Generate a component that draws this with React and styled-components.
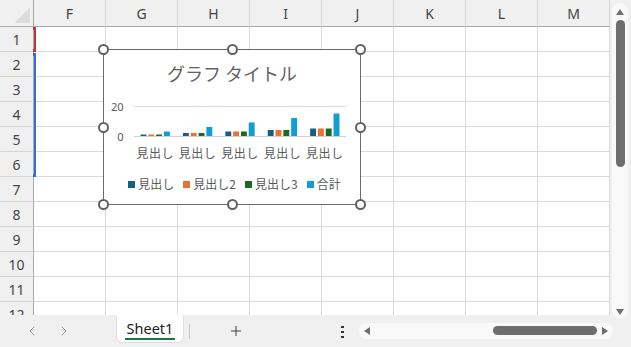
import React from "react";
import styled, { createGlobalStyle } from "styled-components";
import { ChevronLeft, ChevronRight, Plus } from "lucide-react";

const GlobalStyle = createGlobalStyle`
  html, body {
    margin: 0;
    padding: 0;
    background: #f0f0f0;
  }
  body {
    font-family: "Noto Sans", "Liberation Sans", sans-serif;
  }
  * {
    box-sizing: border-box;
  }
`;

const COLUMNS = ["F", "G", "H", "I", "J", "K", "L", "M"];
const ROWS = [1, 2, 3, 4, 5, 6, 7, 8, 9, 10, 11, 12];
const SERIES = [
  { name: "見出し", color: "#156082" },
  { name: "見出し2", color: "#E97132" },
  { name: "見出し3", color: "#196B24" },
  { name: "合計", color: "#0F9ED5" },
];
const DATA = [1, 2, 3, 4, 5].map((v) => [v, v, v, v * 3]);
const HANDLES = [
  [0, 0], [50, 0], [100, 0],
  [0, 50], [100, 50],
  [0, 100], [50, 100], [100, 100],
];

const Window = styled.div`
  width: 631px;
  height: 347px;
  display: flex;
  flex-direction: column;
  background: #f0f0f0;
  overflow: hidden;
`;

const Main = styled.div`
  display: flex;
  height: 315px;
`;

const Sheet = styled.div`
  position: relative;
  width: 610px;
  height: 315px;
  overflow: hidden;
  display: grid;
  grid-template-columns: 34px repeat(8, 72px);
  grid-template-rows: 27px repeat(12, 25px);
  background: #fff;
`;

const Corner = styled.div`
  background: #f0f0f0;
  border-right: 1px solid #a9a9a9;
  border-bottom: 1px solid #a9a9a9;
  background-image: linear-gradient(to bottom right, transparent 50%, #dcdcdc 50%);
  background-repeat: no-repeat;
  background-size: 16px 15px;
  background-position: right 3px bottom 3px;
`;

const ColHeader = styled.div`
  display: flex;
  align-items: center;
  justify-content: center;
  background: #f0f0f0;
  border-right: 1px solid #d6d6d6;
  border-bottom: 1px solid #a9a9a9;
  font-size: 14px;
  color: #444;
`;

const RowHeader = styled.div`
  display: flex;
  align-items: center;
  justify-content: center;
  background: #f0f0f0;
  border-right: 1px solid #a9a9a9;
  border-bottom: 1px solid #d6d6d6;
  font-size: 14px;
  color: #444;
`;

const Cell = styled.div`
  background: #fff;
  border-right: 1px solid #dadada;
  border-bottom: 1px solid #dadada;
`;

const Presence = styled.div`
  position: absolute;
  left: 34px;
  top: ${(p) => p.$top}px;
  width: 2px;
  height: ${(p) => p.$height}px;
  background: ${(p) => p.$color};

  &::before,
  &::after {
    content: "";
    position: absolute;
    left: -1px;
    width: 3px;
    height: 3px;
    background: ${(p) => p.$color};
  }
  &::before {
    top: 0;
  }
  &::after {
    bottom: 0;
  }
`;

const Chart = styled.div`
  position: absolute;
  left: 103px;
  top: 49px;
  width: 258px;
  height: 156px;
  background: #fff;
  border: 1px solid #6b6b6b;
  display: flex;
  flex-direction: column;
  font-family: "Noto Sans CJK JP", "Noto Sans", sans-serif;
  color: #595959;
`;

const HandleLayer = styled.div`
  position: absolute;
  inset: -0.5px;
  pointer-events: none;
`;

const Handle = styled.div`
  position: absolute;
  width: 11px;
  height: 11px;
  margin: -5.5px 0 0 -5.5px;
  border-radius: 50%;
  border: 2px solid #616161;
  background: #fff;
`;

const ChartTitle = styled.div`
  padding-top: 11px;
  line-height: 24px;
  font-size: 18px;
  text-align: center;
  white-space: pre;
  color: #636363;
`;

const PlotSvg = styled.svg`
  display: block;

  text {
    fill: #595959;
  }
  .axis {
    font-family: "Noto Sans", sans-serif;
    font-size: 11px;
  }
  .cat {
    font-family: "Noto Sans CJK JP", sans-serif;
    font-size: 12px;
    letter-spacing: 0.5px;
  }
`;

const Legend = styled.div`
  display: flex;
  justify-content: center;
  gap: 9px;
  margin-top: 9px;
  padding-left: 5px;
  font-size: 12px;
  line-height: 16px;
`;

const LegendItem = styled.div`
  display: flex;
  align-items: center;
  gap: 3px;
`;

const Swatch = styled.span`
  width: 7px;
  height: 7px;
  background: ${(p) => p.$color};
`;

const VScroll = styled.div`
  width: 21px;
  padding: 3px 0 0 2px;
`;

const VTrack = styled.div`
  width: 16px;
  height: 315px;
  border-radius: 8px;
  background: #f9f9f9;
  display: flex;
  flex-direction: column;
  align-items: center;
  padding: 6px 0 3px;
`;

const VThumb = styled.div`
  width: 9px;
  height: 147px;
  margin-top: 5px;
  border-radius: 5px;
  background: #6e6e6e;
`;

const Spacer = styled.div`
  flex: 1;
`;

const BottomBar = styled.div`
  height: 32px;
  display: flex;
  align-items: center;
`;

const NavButtons = styled.div`
  width: 116px;
  display: flex;
  gap: 16px;
  padding-left: 24px;
  color: #999;
`;

const Tab = styled.div`
  align-self: flex-start;
  width: 68px;
  height: 28px;
  background: #fff;
  border: 1px solid #e0e0e0;
  border-top: none;
  border-radius: 0 0 6px 6px;
  display: flex;
  align-items: center;
  justify-content: center;
`;

const TabLabel = styled.span`
  font-size: 14.5px;
  line-height: 19px;
  color: #222;
  padding: 0 2px;
  border-bottom: 2px solid #117a3e;
  margin-top: 1px;
`;

const Separator = styled.div`
  width: 1px;
  height: 15px;
  margin-left: 5px;
  background: #c6c6c6;
`;

const AddButton = styled.div`
  display: flex;
  margin-left: 38px;
  color: #333;
`;

const MoreDots = styled.div`
  display: flex;
  flex-direction: column;
  gap: 2.5px;
  margin-left: 97px;
  margin-top: 2px;

  span {
    width: 2.5px;
    height: 2.5px;
    background: #333;
  }
`;

const HTrack = styled.div`
  width: 254px;
  height: 16px;
  margin-left: 15px;
  margin-top: -1px;
  border-radius: 8px;
  background: #f9f9f9;
  display: flex;
  align-items: center;
  padding: 0 5px;
`;

const HThumb = styled.div`
  width: 104px;
  height: 9px;
  border-radius: 5px;
  background: #6e6e6e;
  margin-right: 5px;
`;

function Arrow({ dir }) {
  const pts = {
    up: "0,6 4,0 8,6",
    down: "0,0 8,0 4,6",
    left: "6,0 6,8 0,4",
    right: "0,0 0,8 6,4",
  }[dir];
  const vertical = dir === "up" || dir === "down";
  return (
    <svg width={vertical ? 8 : 6} height={vertical ? 6 : 8} viewBox={vertical ? "0 0 8 6" : "0 0 6 8"}>
      <polygon points={pts} fill="#6e6e6e" />
    </svg>
  );
}

function Plot() {
  const left = 30;
  const right = 242;
  const base = 51.5;
  const scale = 1.5;
  const catW = (right - left) / DATA.length;
  const barW = 5.9;
  const gap = 1.9;
  const groupW = barW * 4 + gap * 3;
  return (
    <PlotSvg width="256" height="82" viewBox="0 0 256 82">
      <line x1={left} x2={right} y1="21.5" y2="21.5" stroke="#d9d9d9" />
      <line x1={left} x2={right} y1={base} y2={base} stroke="#d0d0d0" />
      <text className="axis" x="19.5" y="25.5" textAnchor="end">20</text>
      <text className="axis" x="19.5" y="55.5" textAnchor="end">0</text>
      {DATA.map((group, i) => {
        const x0 = left + i * catW + (catW - groupW) / 2;
        return (
          <g key={i}>
            {group.map((v, j) => (
              <rect
                key={j}
                x={x0 + j * (barW + gap)}
                y={base - 0.5 - v * scale}
                width={barW}
                height={v * scale}
                fill={SERIES[j].color}
              />
            ))}
            <text className="cat" x={left + i * catW + catW / 2} y="72.5" textAnchor="middle">
              見出し
            </text>
          </g>
        );
      })}
    </PlotSvg>
  );
}

export default function App() {
  return (
    <>
      <GlobalStyle />
      <Window>
        <Main>
          <Sheet>
            <Corner />
            {COLUMNS.map((c) => (
              <ColHeader key={c}>{c}</ColHeader>
            ))}
            {ROWS.map((r) => (
              <React.Fragment key={r}>
                <RowHeader>{r}</RowHeader>
                {COLUMNS.map((c) => (
                  <Cell key={c} />
                ))}
              </React.Fragment>
            ))}

            <Presence $top={27} $height={25} $color="#c4323c" />
            <Presence $top={53} $height={124} $color="#2f6fd6" />

            <Chart>
              <ChartTitle>グラフ タイトル</ChartTitle>
              <Plot />
              <Legend>
                {SERIES.map((s) => (
                  <LegendItem key={s.name}>
                    <Swatch $color={s.color} />
                    {s.name}
                  </LegendItem>
                ))}
              </Legend>
              <HandleLayer>
                {HANDLES.map(([x, y]) => (
                  <Handle key={`${x}-${y}`} style={{ left: `${x}%`, top: `${y}%` }} />
                ))}
              </HandleLayer>
            </Chart>
          </Sheet>

          <VScroll>
            <VTrack>
              <Arrow dir="up" />
              <VThumb />
              <Spacer />
              <Arrow dir="down" />
            </VTrack>
          </VScroll>
        </Main>

        <BottomBar>
          <NavButtons>
            <ChevronLeft size={16} strokeWidth={1.5} />
            <ChevronRight size={16} strokeWidth={1.5} />
          </NavButtons>
          <Tab>
            <TabLabel>Sheet1</TabLabel>
          </Tab>
          <Separator />
          <AddButton>
            <Plus size={16} strokeWidth={1.4} />
          </AddButton>
          <MoreDots>
            <span />
            <span />
            <span />
          </MoreDots>
          <HTrack>
            <Arrow dir="left" />
            <Spacer />
            <HThumb />
            <Arrow dir="right" />
          </HTrack>
        </BottomBar>
      </Window>
    </>
  );
}
